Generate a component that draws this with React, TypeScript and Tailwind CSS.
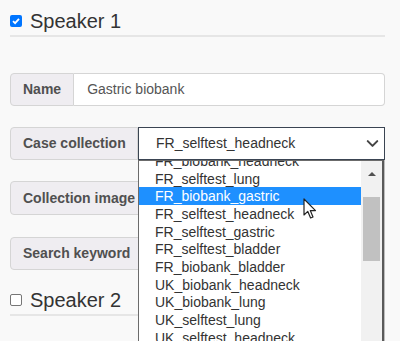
import React from "react";
import { ChevronDown } from "lucide-react";

const options = [
  "FR_biobank_headneck",
  "FR_selftest_lung",
  "FR_biobank_gastric",
  "FR_selftest_headneck",
  "FR_selftest_gastric",
  "FR_selftest_bladder",
  "FR_biobank_bladder",
  "UK_biobank_headneck",
  "UK_biobank_lung",
  "UK_selftest_lung",
  "UK_selftest_headneck",
  "UK_selftest_gastric",
];

function Check({ checked }: { checked?: boolean }) {
  if (checked) {
    return (
      <span className="w-[12px] h-[12px] rounded-[2px] bg-[#0075ff] flex items-center justify-center shrink-0">
        <svg width="10" height="10" viewBox="0 0 10 10">
          <path d="M2 5.2 L4.1 7.2 L8 2.8" stroke="white" strokeWidth="1.8" fill="none" />
        </svg>
      </span>
    );
  }
  return <span className="w-[12px] h-[12px] rounded-[2px] bg-white border border-[#767676] shrink-0" />;
}

function Speaker({ n, checked }: { n: number; checked?: boolean }) {
  return (
    <div>
      <div className="h-[26px] flex items-center gap-[8px]">
        <Check checked={checked} />
        <span className="text-[20px] text-[#333] leading-none">Speaker {n}</span>
      </div>
      <div className="mt-[1px] h-[2px] bg-[#e6e6e6]" />
    </div>
  );
}

function Label({ children, w }: { children: React.ReactNode; w?: string }) {
  return (
    <div
      className={`${w ?? ""} h-full bg-[#efedf1] border border-[#d5d5d5] rounded-l-[4px] px-[12px] flex items-center font-bold text-[14px] text-[#505050] shrink-0 whitespace-nowrap`}
    >
      {children}
    </div>
  );
}

export default function App() {
  return (
    <div
      className="relative w-[400px] h-[341px] overflow-hidden bg-[#f9f9f9]"
      style={{ fontFamily: '"Liberation Sans", Arial, sans-serif' }}
    >
      <div className="w-[375px] ml-[10px] pt-[8px]">
        <Speaker n={1} checked />

        <div className="mt-[36px] h-[33px] flex">
          <Label>Name</Label>
          <div className="flex-1 bg-white border border-l-0 border-[#d5d5d5] rounded-r-[4px] pl-[13px] flex items-center text-[14px] text-[#555]">
            Gastric biobank
          </div>
        </div>

        <div className="mt-[21px] h-[33px] flex">
          <Label w="w-[128px]">Case collection</Label>
          <div className="flex-1 bg-white border border-[#3a4452] pl-[17px] pr-[2px] flex items-center justify-between text-[14px] text-[#333]">
            <span>FR_selftest_headneck</span>
            <ChevronDown size={19} strokeWidth={2.6} className="text-[#444]" />
          </div>
        </div>

        <div className="mt-[21px] h-[34px] flex">
          <Label>Collection image</Label>
          <div className="flex-1 bg-white border border-l-0 border-[#d5d5d5] rounded-r-[4px]" />
        </div>

        <div className="mt-[22px] h-[33px] flex">
          <Label>Search keyword</Label>
          <div className="flex-1 bg-white border border-l-0 border-[#d5d5d5] rounded-r-[4px]" />
        </div>

        <div className="mt-[17px]">
          <Speaker n={2} />
        </div>
      </div>

      {/* open select popup */}
      <div className="absolute left-[138px] top-[160px] w-[246px] h-[190px] bg-white border border-[#6b6b6b] border-r-2 border-r-[#5a5a5a] shadow-[1px_0_0_#bdbdbd] overflow-hidden flex">
        <div className="flex-1 overflow-hidden">
          <div className="-mt-[9px]">
            {options.map((o, i) => (
              <div
                key={o}
                className={`h-[17.7px] pl-[16px] flex items-center text-[14px] leading-none whitespace-nowrap ${
                  i === 2 ? "bg-[#1e90ff] text-white" : "text-[#333]"
                }`}
              >
                {o}
              </div>
            ))}
          </div>
        </div>
        <div className="w-[21px] bg-[#f1f1f1] flex flex-col items-center">
          <svg width="10" height="6" viewBox="0 0 10 6" className="mt-[10px]">
            <path d="M1 5 L5 1 L9 5 Z" fill="#505050" />
          </svg>
          <div className="mt-[20px] w-[17px] h-[64px] bg-[#c1c1c1]" />
        </div>
      </div>

      {/* mouse pointer */}
      <svg className="absolute left-[303px] top-[198px]" width="14" height="22" viewBox="0 0 14 22">
        <path
          d="M1 1 L1 17 L4.8 13.4 L7.6 20 L10 19 L7.3 12.6 L12.5 12.6 Z"
          fill="white"
          stroke="#222"
          strokeWidth="1.2"
          strokeLinejoin="round"
        />
      </svg>
    </div>
  );
}
